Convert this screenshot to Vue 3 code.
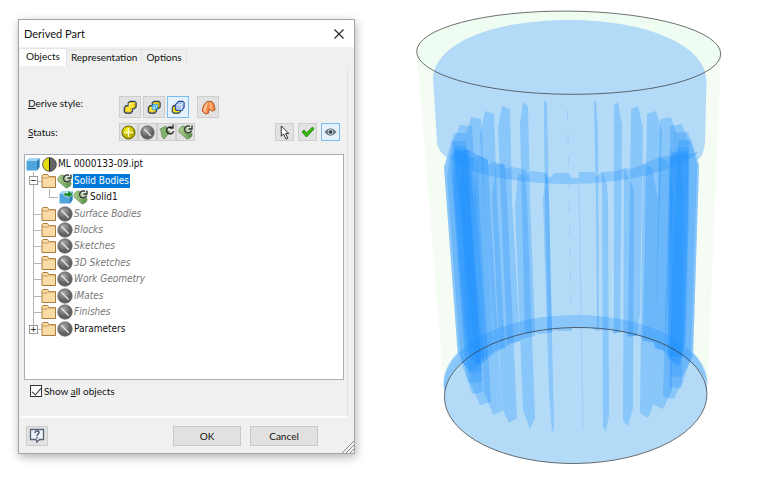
<script setup>
import { ref } from "vue";

const tabs = ["Objects", "Representation", "Options"];
const activeTab = ref("Objects");
const deriveStyle = ref("separate");
const showAll = ref(true);

const folders = [
  { name: "Surface Bodies" },
  { name: "Blocks" },
  { name: "Sketches" },
  { name: "3D Sketches" },
  { name: "Work Geometry" },
  { name: "iMates" },
  { name: "Finishes" },
  { name: "Parameters", filled: true },
];

// ribs on the far side of the cylinder, seen through the wall
const farRibs = [
  "544,100 547,103 549,200 552,332 548,333 545,200 544,125",
  "523,102 528,106 530,200 535,332 525,334 520,124",
  "502,106 510,109 512,200 520,341 507,343 498,128",
  "485,111 494,114 497,200 505,347 495,350 480,135",
  "471,117 481,119 485,200 494,352 486,357 466,135",
  "460,125 472,126 476,200 487,358 476,364 459,200 453,143",
  "454,133 466,133 471,220 482,371 469,373 458,353 444,167",
  "452,141 466,141 471,220 482,382 469,383 461,363 447,177",
  "454,145 467,148 474,200 484,355 476,366 465,345 454,200 451,165",
  "455,150 468,151 475,250 484,360 478,366 466,335 455,200",
  "594,103 596,100 598,135 599,328 597,329 596,200",
  "614,105 618,102 622,125 620,332 614,334",
  "631,109 638,106 643,128 640,313 637,336 628,337",
  "647,114 656,111 662,132 655,343 643,340",
  "660,119 671,117 676,133 665,352 655,347",
  "670,126 682,124 689,143 683,357 670,357",
  "675,133 688,132 699,163 693,357 682,377 671,376",
  "678,140 691,140 697,165 691,357 681,388 669,387",
  "669,160 678,147 689,147 689,180 685,340 680,365 668,360",
  "671,158 679,150 688,152 689,200 686,340 678,368 667,355",
];

// ribs on the near side, starting under the collar
const nearRibs = [
  "546,173 548,180 549,200 554,427 552,433 549,390 543,200",
  "518,174 525,175 527,200 535,418 530,429 523,410 515,207",
  "496,164 505,165 507,200 517,418 509,423 502,408 492,197",
  "478,155 488,160 490,200 502,411 493,415 484,392 474,195",
  "464,149 477,154 479,200 491,402 480,405 470,382 460,185",
  "456,149 470,150 473,200 483,392 472,394 466,375 452,180",
  "602,172 607,185 608,200 609,415 606,431 603,427",
  "624,168 633,187 634,200 633,408 628,426 623,421",
  "643,164 652,168 658,200 654,403 648,418 640,413",
  "659,157 668,162 674,195 672,391 663,409 654,405",
  "670,150 680,155 683,190 682,382 674,399 663,397",
];
</script>

<template>
  <main class="workspace">
    <section class="dialog" aria-label="Derived Part">
      <header class="title-bar">
        <h1>Derived Part</h1>
        <button class="close" aria-label="Close">
          <svg viewBox="0 0 10 10" width="10" height="10"><path d="M.5 .5 9.500 9.500M9.500 .5 .5 9.500" stroke="#222" stroke-width="1.1" /></svg>
        </button>
      </header>

      <nav class="tabs">
        <button
          v-for="tab in tabs"
          :key="tab"
          :class="{ active: tab === activeTab }"
          @click="activeTab = tab"
        >{{ tab }}</button>
      </nav>

      <div class="panel">
        <div class="tool-row derive">
          <span class="label"><u>D</u>erive style:</span>
          <button class="tool" :class="{ on: deriveStyle === 'merged' }" aria-label="Single body, merged seams" @click="deriveStyle = 'merged'">
            <svg viewBox="0 0 16 16" width="14" height="14">
              <path d="M6 3 8 1.500h5.500L15 3v5l-2 2h-2v2.500L9 15H3l-1.500-1.500V8.500L3.500 6.500H6Z" fill="#e0b90c" stroke="#273e63" stroke-width="1.300" />
              <path d="M7 4h5v5H8v4H3.500V8.500H7Z" fill="#ffe83c" /><path d="m12 4 2-1.500M8 13l2-2M7 8.500V4h5" fill="none" stroke="#fff59b" />
            </svg>
          </button>
          <button class="tool" :class="{ on: deriveStyle === 'seams' }" aria-label="Single body, visible seams" @click="deriveStyle = 'seams'">
            <svg viewBox="0 0 16 16" width="14" height="14">
              <path d="M6 3 8 1.500h5.500L15 3v5l-2 2h-2v2.500L9 15H3l-1.500-1.500V8.500L3.500 6.500H6Z" fill="#e0b90c" stroke="#273e63" stroke-width="1.300" />
              <path d="M7 4h5v5H8v4H3.500V8.500H7Z" fill="#ffe83c" />
              <path d="M6 7h4v4H6zM6 7l1.500-2H12v4l-2 2" fill="#bde5f5" stroke="#159ae5" />
            </svg>
          </button>
          <button class="tool" :class="{ on: deriveStyle === 'separate' }" aria-label="Separate bodies" @click="deriveStyle = 'separate'">
            <svg viewBox="0 0 16 16" width="14" height="14">
              <path d="M3 6.500h6l2 2V13l-2 2H3l-1.500-1.500V8.500Z" fill="#f6dc19" stroke="#273e63" stroke-width="1.300" />
              <path d="M5 5.500 8.500 1.500h5L15 3v5.500L12.500 12H6.500L5 10.500Z" fill="#a9c5ed" stroke="#294c9d" stroke-width="1.300" />
              <path d="M6.500 5.500H12V11M12 5.500l2-2.500" fill="none" stroke="#e7f2ff" />
            </svg>
          </button>
          <button class="tool work" :class="{ on: deriveStyle === 'work' }" aria-label="Work surface" @click="deriveStyle = 'work'">
            <svg viewBox="0 0 16 16" width="15" height="15">
              <path d="M1.500 12C1.500 7 4 3 7 1.500h4c3 1 3.500 5 4 9L12 12 9 9.500 8 14l-3 1Z" fill="#f58a4b" stroke="#a8501d" />
              <path d="M2.500 11.500C3 7 5 4 8 2.500 6 6 5.500 10 5 13.500Z" fill="#ffc79b" /><path d="M10 2.500c2 2 2 4 2 9L9.500 9c0-3 0-5-1.500-6Z" fill="#ffb07a" />
            </svg>
          </button>
        </div>

        <div class="tool-row status">
          <span class="label"><u>S</u>tatus:</span>
          <button class="tool" aria-label="Include"><svg width="15" height="15"><use href="#i-plus" /></svg></button>
          <button class="tool" aria-label="Exclude"><svg width="15" height="15"><use href="#i-none" /></svg></button>
          <button class="tool" aria-label="Include as surface">
            <svg viewBox="0 0 16 16" width="16" height="16">
              <path d="m1 5 6-3c0 3 1 5 4 6l-6 7C2 13 3 8 1 5Z" fill="#83b26d" stroke="#55804b" stroke-width=".6" />
              <path d="M13 3.500A3.500 3.500 0 1 0 14.500 7M10.500 4H14V.5" fill="none" stroke="#222" stroke-width="1.300" />
            </svg>
          </button>
          <button class="tool" aria-label="Include bounding body"><svg width="16" height="16"><use href="#i-body" /></svg></button>
          <span class="spacer"></span>
          <button class="tool wide" aria-label="Select from base">
            <svg viewBox="0 0 12 16" width="12" height="15"><path d="M2 1v11l2.500-2.500L7 15l2-1-2.300-5H10Z" fill="#fff" stroke="#222" /></svg>
          </button>
          <button class="tool wide" aria-label="Accept selection">
            <svg viewBox="0 0 14 12" width="14" height="12"><path d="m1 6 2-2 2.500 3L11.500 1l1.500 2-7.500 8Z" fill="#38b90d" stroke="#278b0a" /></svg>
          </button>
          <button class="tool wide on" aria-label="Show preview">
            <svg viewBox="0 0 14 10" width="13" height="10">
              <path d="M.5 5Q7-3 13.500 5 7 13 .5 5Z" fill="#66717b" /><circle cx="7" cy="5" r="3" fill="#cdd7dd" /><circle cx="7" cy="5" r="2" fill="#37444f" />
            </svg>
          </button>
        </div>

        <ul class="tree">
          <li class="root">
            <svg width="14" height="14"><use href="#i-cube" /></svg>
            <svg viewBox="0 0 15 15" width="15" height="15">
              <circle cx="7.500" cy="7.500" r="6.800" fill="#666" stroke="#444" /><path d="M7.500 1a6.500 6.500 0 0 0 0 13Z" fill="#e6dc12" /><path d="M7.500 1v13" stroke="#111" />
            </svg>
            <span class="name">ML 0000133-09.ipt</span>
          </li>
          <li class="branch">
            <span class="expander">−</span>
            <svg class="folder" width="16" height="16"><use href="#i-folder" /></svg>
            <svg width="16" height="16"><use href="#i-body" /></svg>
            <span class="name selected">Solid Bodies</span>
          </li>
          <li class="branch child">
            <svg viewBox="0 0 14 14" width="14" height="14">
              <use href="#i-cube" /><path d="M5 3h4V0l5 4.500L9 8V6H5Z" fill="#138b20" stroke="#fff" stroke-width=".5" />
            </svg>
            <svg width="16" height="16"><use href="#i-body" /></svg>
            <span class="name">Solid1</span>
          </li>
          <li v-for="item in folders" :key="item.name" class="branch" :class="{ empty: !item.filled, last: item.filled }">
            <span v-if="item.filled" class="expander">+</span>
            <svg class="folder" width="16" height="16"><use href="#i-folder" /></svg>
            <svg width="16" height="16"><use href="#i-none" /></svg>
            <span class="name">{{ item.name }}</span>
          </li>
        </ul>

        <label class="check"><input v-model="showAll" type="checkbox" /><span>Show <u>a</u>ll objects</span></label>
      </div>

      <footer>
        <button class="tool help" aria-label="Help">
          <svg viewBox="0 0 16 16" width="16" height="16">
            <path d="M1.500 1.500h13v10h-4L8 14l-1-2.500H1.500Z" fill="#eef4fa" stroke="#596574" stroke-width="1.300" />
            <path d="M6 5c0-3 4-2.500 4-.5C10 6 8 6 8 8M8 9v1.500" fill="none" stroke="#35465b" stroke-width="1.300" />
          </svg>
        </button>
        <span class="spacer"></span>
        <button class="action">OK</button>
        <button class="action">Cancel</button>
      </footer>
      <svg class="grip" viewBox="0 0 12 12" width="12" height="12"><path d="M0 12 12 0M4 12l8-8M8 12l4-4" stroke="#8b8b8b" /></svg>
    </section>

    <svg class="model" viewBox="400 0 363 483" role="img" aria-label="Part preview">
      <path d="M417 53 443 375Q443 395 460 395H690Q708 390 708 375L721 54Z" fill="#f4fcf3" />
      <ellipse cx="568.700" cy="52.700" rx="152" ry="41.600" fill="#effcf1" transform="rotate(.5 568.700 52.700)" />
      <path d="M433 78C435 44 490 20 570 20S706 47 706.500 80L705 143Q703 158 697 160L699 167 693 360H458L444 167 447 158Q438 151 437 143Z" fill="#b3dbf7" />
      <path d="M437 143C446 170 505 184 570 184S693 170 705 143Z" fill="#b3dbf7" />
      <ellipse cx="575.500" cy="383" rx="132" ry="68" fill="#b3dbf7" />
      <ellipse cx="575.700" cy="395.500" rx="131.300" ry="68" fill="#b3dbf7" transform="rotate(-.8 575.700 395.500)" />

      <g class="ribs">
        <path d="M449 158C475 177 522 184 570 184S675 173 699 152L680 155 659 157 653 160 643 164 633 169 624 168 618 171 602 172 596 177 594 172H579V178H571L569 173H554L551 177H547V173L531 171 528 175 524 169 511 167 505 169 504 164 493 162 488 165V160L478 155 470 158 456 149Z" />
        <path d="M443.500 385C445 345 505 315 575 315S705 343 707.500 385C706 377 699 369 690 362L681 355 670 357 663 350 655 349 653 342 643 341 640 336 628 336 624 332 614 333 610 329 597 331 591 328H572V331H558L552 329 553 332 541 334 535 333V336L522 339 518 342 506 346 505 348 494 353 482 364 470 371 462 362Q446 376 444.500 394Z" />
        <polygon v-for="points in farRibs" :key="points" :points="points" />
        <polygon v-for="points in nearRibs" :key="points" :points="points" />
      </g>
      <path d="m567.500 110 4 219" class="seam dashed" />
      <path d="m579 186 4 244" class="seam" />

      <g class="edges">
        <ellipse cx="568.700" cy="52.700" rx="152" ry="41.600" transform="rotate(.5 568.700 52.700)" />
        <ellipse cx="575.700" cy="395.500" rx="131.300" ry="68" transform="rotate(-.8 575.700 395.500)" />
      </g>
    </svg>

    <svg class="symbols" width="0" height="0" aria-hidden="true">
      <defs>
        <radialGradient id="g-gray" cx=".4" cy=".3"><stop stop-color="#aaa" /><stop offset="1" stop-color="#606060" /></radialGradient>
        <radialGradient id="g-yellow" cx=".4" cy=".3"><stop stop-color="#fff51b" /><stop offset="1" stop-color="#b8b000" /></radialGradient>
        <linearGradient id="g-green"><stop stop-color="#afd18d" /><stop offset="1" stop-color="#548b49" /></linearGradient>
      </defs>
      <symbol id="i-none" viewBox="0 0 15 15"><circle cx="7.500" cy="7.500" r="6.800" fill="url(#g-gray)" stroke="#666" stroke-width=".6" /><path d="m4 4 7 7" stroke="#e5e5e5" stroke-width="1.200" /></symbol>
      <symbol id="i-plus" viewBox="0 0 15 15"><circle cx="7.500" cy="7.500" r="6.500" fill="url(#g-yellow)" stroke="#665f00" /><path d="M7.500 3v9M3 7.500h9" stroke="#fffbd0" stroke-width="1.300" /></symbol>
      <symbol id="i-body" viewBox="0 0 16 16">
        <path d="M1 8C0 5 3 2 6 2l7 6c3 3-1 7-4 7Z" fill="url(#g-green)" stroke="#5d8b50" stroke-width=".7" />
        <circle cx="10.500" cy="5.500" r="4.500" fill="#dce8d2" opacity=".7" />
        <path d="M13.500 6.500A3.500 3.500 0 1 1 12 2.500M10.500 5H14V1.500" fill="none" stroke="#292d29" stroke-width="1.300" />
      </symbol>
      <symbol id="i-cube" viewBox="0 0 14 14"><path d="M.5 4 3 1.500h10.500V10L11 13.500H.5Z" fill="#4fa5db" /><path d="M.5 4 3 1.500h10.500L11 4Z" fill="#9dd8f5" /><path d="M11 4v9.500L13.500 10V1.500Z" fill="#2e7fb8" /></symbol>
      <symbol id="i-folder" viewBox="0 0 16 16"><path d="M1 14.500V2.500L2 1.500h4.500l1.500 2h6.500v11Z" fill="#f9dba5" stroke="#a87b3c" /><path d="M1.500 5h5l1.500-1h6" fill="none" stroke="#c69b5b" /></symbol>
    </svg>
  </main>
</template>

<style>
body {
  margin: 0;
  background: #fff;
}
</style>

<style scoped>
* {
  box-sizing: border-box;
}

.workspace {
  display: flex;
  align-items: flex-start;
  font-family: Lato, "Open Sans", sans-serif;
  font-size: 10px;
  line-height: 14px;
  color: #111;
}

.dialog {
  position: relative;
  flex: 0 1 337px;
  margin: 19px 45px 20px 18px;
  background: #f0f0f0;
  border: 1px solid #a5a5a5;
  box-shadow: 1px 3px 9px rgba(0, 0, 0, 0.3);
}

button {
  padding: 0;
  font: inherit;
  color: inherit;
}

.title-bar {
  display: flex;
  justify-content: space-between;
  align-items: center;
  height: 27px;
  padding: 0 10px 0 5px;
  background: #fff;
}

h1 {
  margin: 0;
  font-size: 11px;
  font-weight: 400;
}

.close {
  display: flex;
  border: 0;
  background: none;
}

.tabs {
  display: flex;
  align-items: flex-end;
  height: 19px;
  padding-left: 1px;
}

.tabs button {
  height: 17px;
  padding: 0 4px 2px;
  border: 1px solid #e3e3e3;
  border-bottom: 0;
  border-left: 0;
  background: #f0f0f0;
}

.tabs .active {
  height: 18px;
  padding: 0 6px 3px;
  background: #fff;
}

.panel {
  margin: 0 6px 0 2px;
  padding: 30px 3px 18px;
  border-right: 1px solid #e2e2e2;
  border-bottom: 2px solid #fff;
}

.tool-row {
  display: flex;
  align-items: center;
}

.label {
  width: 95px;
  padding-left: 4px;
}

.derive .label {
  align-self: flex-start;
}

.spacer {
  flex: 1;
}

.tool {
  display: flex;
  align-items: center;
  justify-content: center;
  border: 1px solid #cdcdcd;
  background: #e2e2e2;
}

.derive .tool {
  width: 22px;
  height: 22px;
  margin-right: 2px;
}

.derive .work {
  margin-left: 6px;
}

.status {
  height: 18px;
  margin-top: 5px;
}

.status .tool {
  width: 19px;
  height: 18px;
}

.status .wide {
  margin-right: 4px;
}

.tool-row .on {
  border-color: #7bbcf0;
  background: #e5f2fd;
}

.tree {
  display: grid;
  grid-template-rows: repeat(11, 1fr);
  height: 226px;
  margin: 13px 0 0;
  padding: 1px 0 42px 1px;
  border: 1px solid #a9adb3;
  background: #fff;
  list-style: none;
  font-family: "DejaVu Sans Condensed", "DejaVu Sans", sans-serif;
}

.tree li {
  position: relative;
  display: flex;
  align-items: center;
  min-height: 0;
}

.root svg + svg {
  margin-left: 2px;
}

.branch {
  padding-left: 15px;
}

.branch::before {
  content: "";
  position: absolute;
  left: 7px;
  top: 0;
  width: 8px;
  height: 50%;
  border-left: 1px solid #b5b5b5;
  border-bottom: 1px solid #b5b5b5;
}

.branch::after {
  content: "";
  position: absolute;
  left: 7px;
  top: 50%;
  bottom: 0;
  border-left: 1px solid #b5b5b5;
}

.last::after {
  display: none;
}

.child {
  padding-left: 33px;
}

.child::before {
  left: 23px;
}

.child::after {
  top: 0;
}

.expander {
  position: absolute;
  z-index: 1;
  left: 3px;
  top: 4px;
  width: 9px;
  height: 9px;
  border: 1px solid #999;
  background: #fff;
  font-size: 9px;
  line-height: 7px;
  text-align: center;
}

.name {
  padding: 0 1px;
  white-space: nowrap;
}

.empty .name {
  color: #777;
  font-style: italic;
}

.selected {
  background: #0078d7;
  color: #fff;
}

.check {
  display: flex;
  align-items: center;
  width: max-content;
  margin: 4px 0 0 6px;
}

.check input {
  appearance: none;
  position: relative;
  width: 12px;
  height: 12px;
  margin: 0 2px 0 0;
  border: 1px solid #333;
  background: #fff;
}

.check input:checked::after {
  content: "";
  position: absolute;
  left: 3px;
  top: 0;
  width: 4px;
  height: 8px;
  border: solid #333;
  border-width: 0 1px 1px 0;
  transform: rotate(40deg);
}

footer {
  display: flex;
  gap: 9px;
  padding: 8px 36px 7px 7px;
}

.help {
  width: 22px;
  height: 20px;
}

.action {
  width: 68px;
  height: 20px;
  border: 1px solid #c8c8c8;
  background: #e1e1e1;
}

.grip {
  position: absolute;
  right: 0;
  bottom: 0;
}

.model {
  flex: 1;
  min-width: 0;
}

.ribs {
  fill: #1e90ff;
  fill-opacity: 0.28;
}

.seam {
  stroke: #8cc4f5;
  stroke-width: 0.6;
}

.dashed {
  stroke-dasharray: 10 13;
}

.edges {
  fill: none;
  stroke: #333;
  stroke-width: 0.7;
}

.symbols {
  position: absolute;
}
</style>
